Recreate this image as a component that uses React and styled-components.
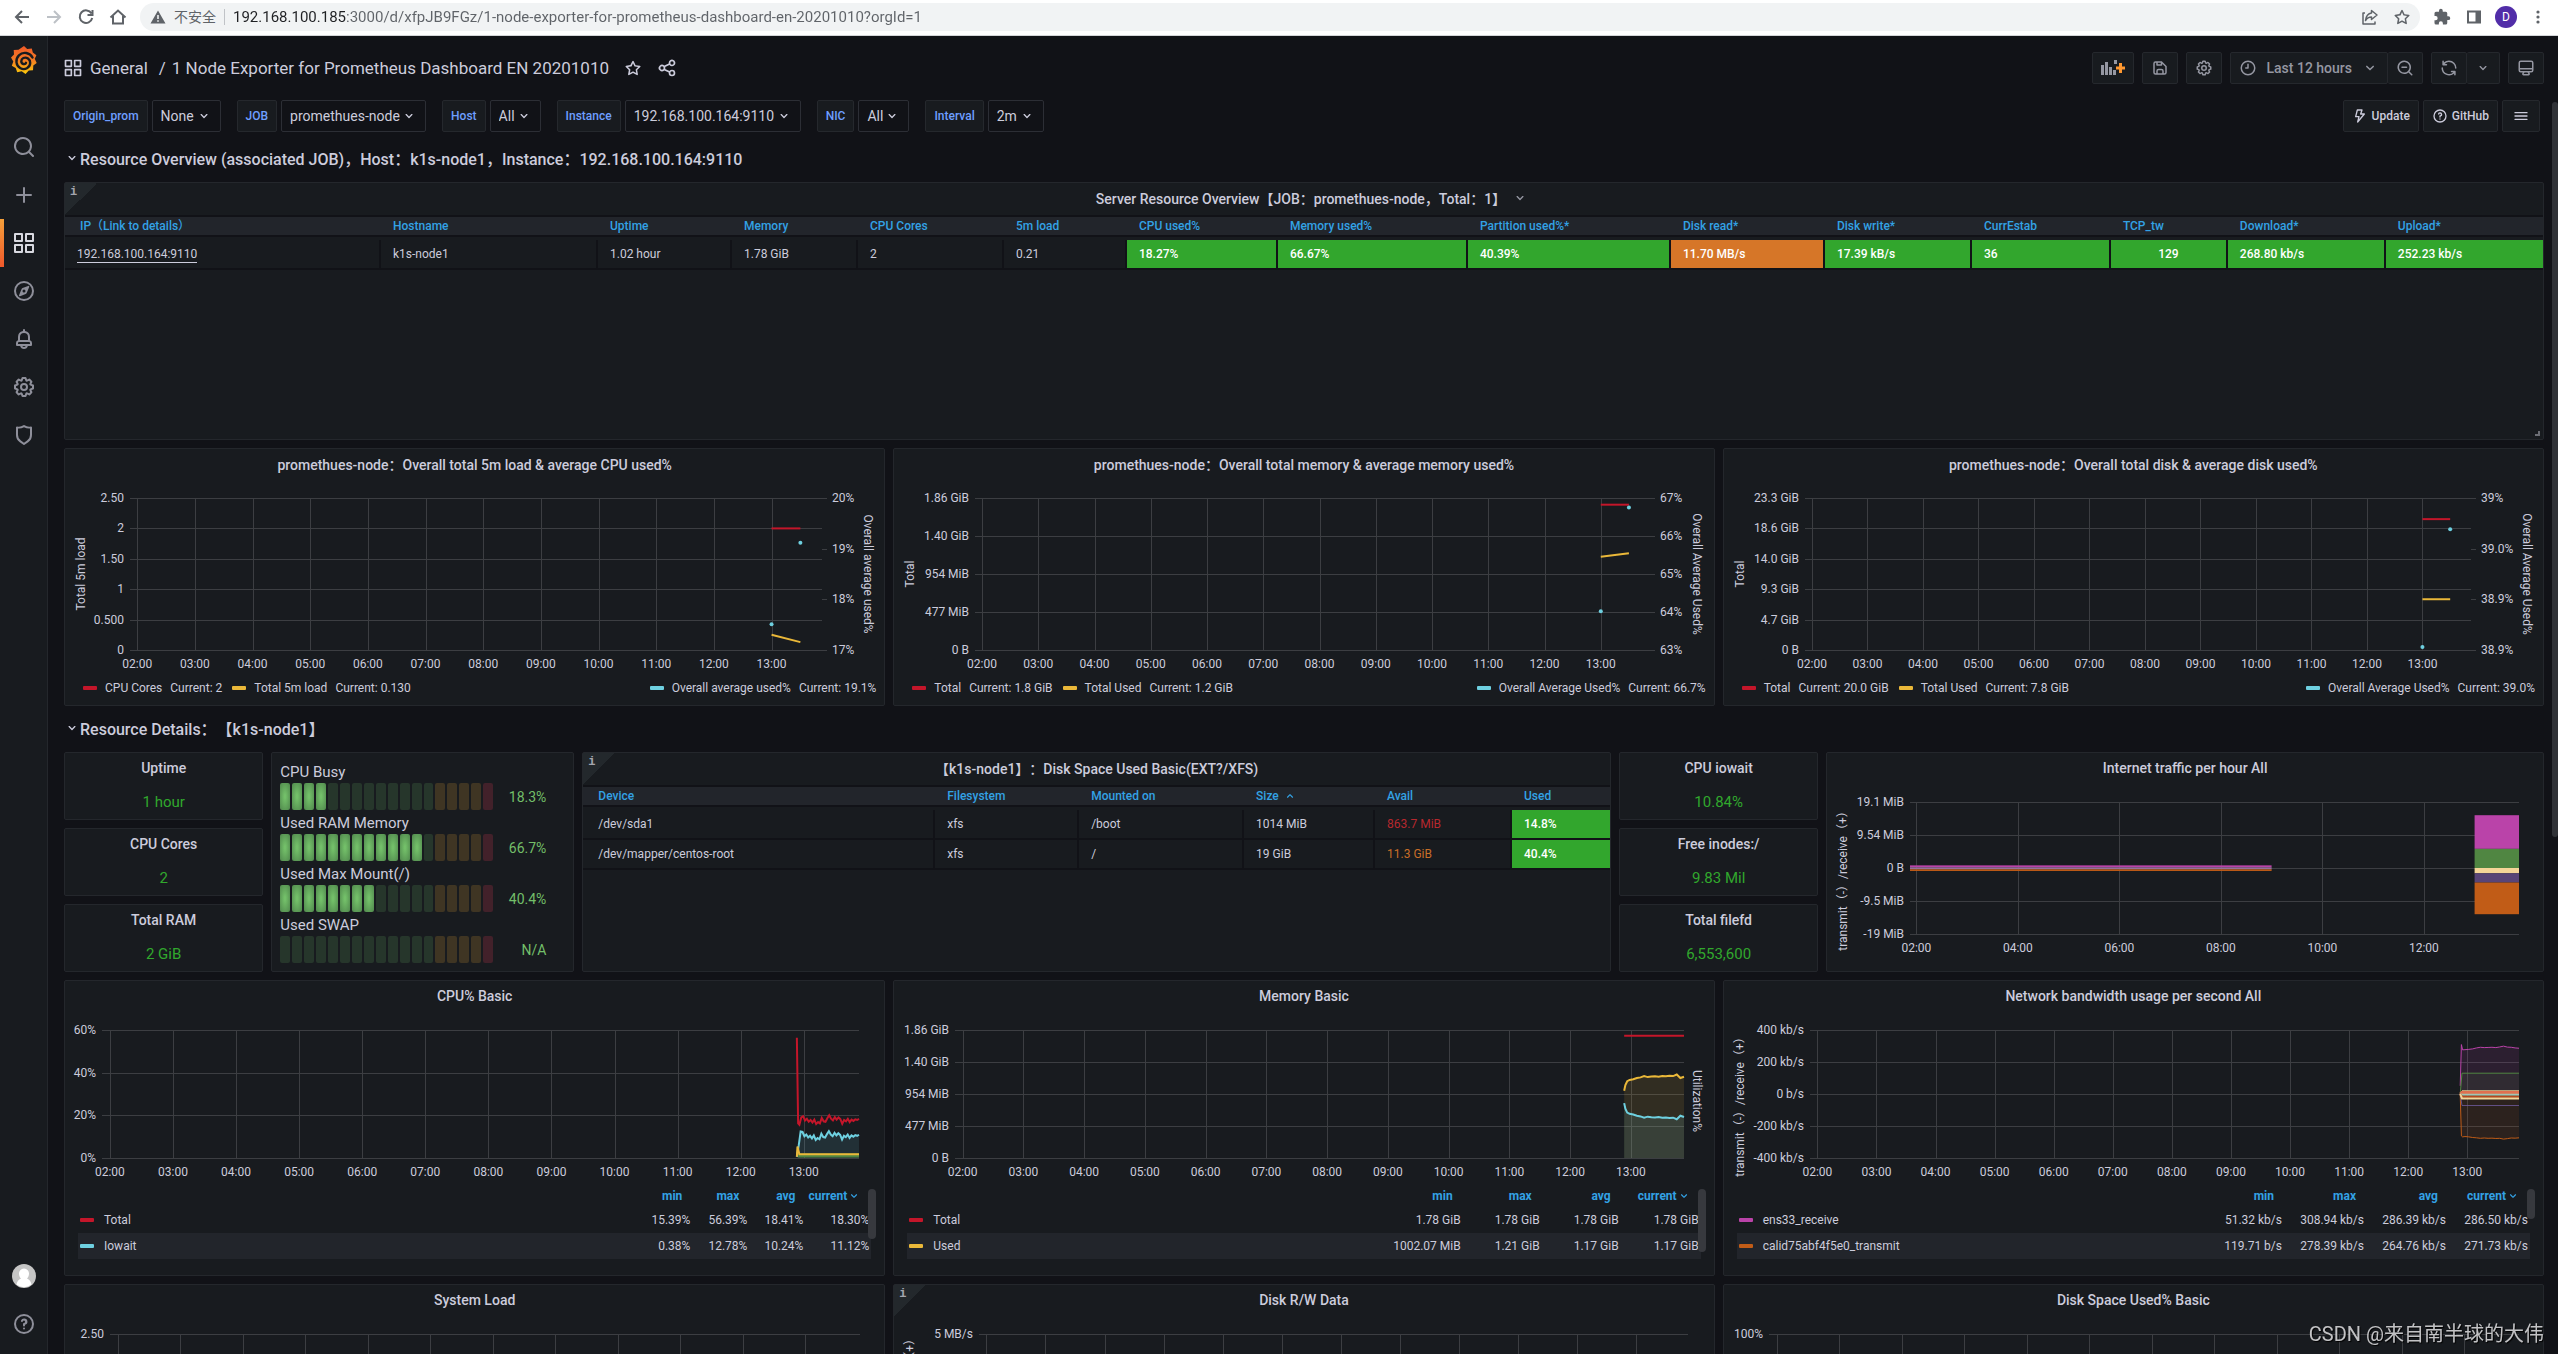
import React, { useLayoutEffect, useRef, useState } from 'react';
import styled, { createGlobalStyle } from 'styled-components';

const GlobalStyle = createGlobalStyle`
  * {
    box-sizing: border-box;
  }
  body {
    margin: 0;
    background: #111217;
    color: #ccccdc;
    font-family: Roboto, 'Noto Sans CJK SC', sans-serif;
    font-size: 14px;
    text-spacing-trim: space-all;
  }
  button, input, select {
    font-family: inherit;
  }
  a {
    color: inherit;
    text-decoration: none;
  }
`;

const colors = {
  red: '#c4162a',
  yellow: '#eab839',
  cyan: '#6ed0e0',
  magenta: '#ba43a9',
  green: '#508642',
  orange: '#c15c17',
  cream: '#f4d598',
  purple: '#584477',
  ok: '#32a62d',
  warn: '#d67628',
};

/* ---------- icons ---------- */

const icons = {
  apps: 'M10,13H3a1,1,0,0,0-1,1v7a1,1,0,0,0,1,1h7a1,1,0,0,0,1-1V14A1,1,0,0,0,10,13ZM9,20H4V15H9ZM21,2H14a1,1,0,0,0-1,1v7a1,1,0,0,0,1,1h7a1,1,0,0,0,1-1V3A1,1,0,0,0,21,2ZM20,9H15V4h5Zm1,4H14a1,1,0,0,0-1,1v7a1,1,0,0,0,1,1h7a1,1,0,0,0,1-1V14A1,1,0,0,0,21,13Zm-1,7H15V15h5ZM10,2H3A1,1,0,0,0,2,3v7a1,1,0,0,0,1,1h7a1,1,0,0,0,1-1V3A1,1,0,0,0,10,2ZM9,9H4V4H9Z',
  search: 'M21.71,20.29,18,16.61A9,9,0,1,0,16.61,18l3.68,3.68a1,1,0,0,0,1.42,0A1,1,0,0,0,21.71,20.29ZM11,18a7,7,0,1,1,7-7A7,7,0,0,1,11,18Z',
  zoomOut: 'M21.71,20.29,18,16.61A9,9,0,1,0,16.61,18l3.68,3.68a1,1,0,0,0,1.42,0A1,1,0,0,0,21.71,20.29ZM11,18a7,7,0,1,1,7-7A7,7,0,0,1,11,18ZM14,10H8a1,1,0,0,0,0,2h6a1,1,0,0,0,0-2Z',
  plus: 'M19,11H13V5a1,1,0,0,0-2,0v6H5a1,1,0,0,0,0,2h6v6a1,1,0,0,0,2,0V13h6a1,1,0,0,0,0-2Z',
  compass: 'M12,2A10,10,0,1,0,22,12,10,10,0,0,0,12,2Zm0,18a8,8,0,1,1,8-8A8,8,0,0,1,12,20ZM16.2,6.9l-5.6,2.2a2,2,0,0,0-1.1,1.1L7,16.2a.8.8,0,0,0,1,1l5.700-2.300a2,2,0,0,0,1.100-1.100L17.200,7.900A.8.8,0,0,0,16.200,6.900ZM12,13.500A1.500,1.500,0,1,1,13.500,12,1.500,1.500,0,0,1,12,13.500Z',
  bell: 'M18,13.18V10a6,6,0,0,0-5-5.91V3a1,1,0,0,0-2,0V4.09A6,6,0,0,0,6,10v3.18A3,3,0,0,0,4,16v2a1,1,0,0,0,1,1H8.14a4,4,0,0,0,7.72,0H19a1,1,0,0,0,1-1V16A3,3,0,0,0,18,13.18ZM8,10a4,4,0,0,1,8,0v3H8Zm4,10a2,2,0,0,1-1.720-1h3.440A2,2,0,0,1,12,20Zm6-3H6V16a1,1,0,0,1,1-1H17a1,1,0,0,1,1,1Z',
  cog: 'M21.32,9.55l-1.89-.63.89-1.78A1,1,0,0,0,20.13,6L18,3.87a1,1,0,0,0-1.15-.19l-1.78.89-.63-1.89A1,1,0,0,0,13.5,2h-3a1,1,0,0,0-.95.68L8.92,4.57,7.14,3.68A1,1,0,0,0,6,3.87L3.87,6a1,1,0,0,0-.19,1.15l.89,1.78-1.89.63A1,1,0,0,0,2,10.5v3a1,1,0,0,0,.68.95l1.89.63-.89,1.78A1,1,0,0,0,3.87,18L6,20.13a1,1,0,0,0,1.15.19l1.78-.89.63,1.89a1,1,0,0,0,.95.68h3a1,1,0,0,0,.95-.68l.63-1.89,1.78.89A1,1,0,0,0,18,20.13L20.13,18a1,1,0,0,0,.19-1.15l-.89-1.78,1.89-.63A1,1,0,0,0,22,13.5v-3A1,1,0,0,0,21.32,9.55ZM20,12.78l-1.2.4A2,2,0,0,0,17.64,16l.57,1.14-1.1,1.1L16,17.64a2,2,0,0,0-2.79,1.16l-.4,1.2H11.22l-.4-1.2A2,2,0,0,0,8,17.64l-1.14.57-1.1-1.1L6.36,16A2,2,0,0,0,5.2,13.18L4,12.78V11.22l1.2-.4A2,2,0,0,0,6.36,8L5.79,6.89l1.1-1.1L8,6.36A2,2,0,0,0,10.82,5.2l.4-1.2h1.56l.4,1.2A2,2,0,0,0,16,6.36l1.14-.57,1.1,1.1L17.64,8a2,2,0,0,0,1.16,2.79l1.2.4ZM12,8a4,4,0,1,0,4,4A4,4,0,0,0,12,8Zm0,6a2,2,0,1,1,2-2A2,2,0,0,1,12,14Z',
  shield: 'M19.63,3.65a1,1,0,0,0-.84-.2,8,8,0,0,1-6.22-1.27,1,1,0,0,0-1.14,0A8,8,0,0,1,5.21,3.45a1,1,0,0,0-.84.2A1,1,0,0,0,4,4.43v7.45a9,9,0,0,0,3.77,7.33l3.65,2.6a1,1,0,0,0,1.16,0l3.65-2.6A9,9,0,0,0,20,11.88V4.43A1,1,0,0,0,19.63,3.65ZM18,11.88a7,7,0,0,1-2.93,5.7L12,19.77,8.93,17.58A7,7,0,0,1,6,11.88V5.58a10,10,0,0,0,6-1.39,10,10,0,0,0,6,1.39Z',
  question: 'M12,2A10,10,0,1,0,22,12,10,10,0,0,0,12,2Zm0,18a8,8,0,1,1,8-8A8,8,0,0,1,12,20ZM12,6.500a3.200,3.200,0,0,0-3,2.100,1,1,0,1,0,1.900.6A1.200,1.200,0,1,1,12,11a1,1,0,0,0-1,1v1.500a1,1,0,0,0,2,0v-.7A3.200,3.200,0,0,0,12,6.500ZM12,15.500a1,1,0,1,0,1,1A1,1,0,0,0,12,15.500Z',
  down: 'M17,9.17a1,1,0,0,0-1.41,0L12,12.71,8.46,9.17a1,1,0,0,0-1.41,0,1,1,0,0,0,0,1.42l4.24,4.24a1,1,0,0,0,1.42,0L17,10.59A1,1,0,0,0,17,9.17Z',
  up: 'M17,14.83a1,1,0,0,1-1.41,0L12,11.29,8.46,14.83a1,1,0,0,1-1.41,0,1,1,0,0,1,0-1.42l4.24-4.24a1,1,0,0,1,1.42,0L17,13.41A1,1,0,0,1,17,14.83Z',
  star: 'M22,9.67A1,1,0,0,0,21.14,9l-5.69-.83L12.9,3a1,1,0,0,0-1.8,0L8.55,8.16,2.86,9a1,1,0,0,0-.81.68,1,1,0,0,0,.25,1l4.13,4-1,5.68A1,1,0,0,0,6.9,21.44L12,18.77l5.1,2.67a.93.93,0,0,0,.46.12,1,1,0,0,0,.59-.19,1,1,0,0,0,.4-1l-1-5.68,4.13-4A1,1,0,0,0,22,9.67Zm-6.15,4a1,1,0,0,0-.29.88l.72,4.2-3.76-2a1.06,1.06,0,0,0-.94,0l-3.76,2,.72-4.2a1,1,0,0,0-.29-.88l-3-3,4.21-.61a1,1,0,0,0,.76-.55L12,5.7l1.88,3.82a1,1,0,0,0,.76.55l4.21.61Z',
  share: 'M18,14a4,4,0,0,0-3.08,1.48l-5.1-2.35a3.64,3.64,0,0,0,0-2.26l5.1-2.35A4,4,0,1,0,14,6a4.17,4.17,0,0,0,.07.71L8.79,9.14a4,4,0,1,0,0,5.72l5.28,2.43A4.17,4.17,0,0,0,14,18a4,4,0,1,0,4-4ZM18,4a2,2,0,1,1-2,2A2,2,0,0,1,18,4ZM6,14a2,2,0,1,1,2-2A2,2,0,0,1,6,14Zm12,6a2,2,0,1,1,2-2A2,2,0,0,1,18,20Z',
  save: 'M20.71,9.29l-6-6a1,1,0,0,0-.32-.21A1.09,1.09,0,0,0,14,3H6A3,3,0,0,0,3,6V18a3,3,0,0,0,3,3H18a3,3,0,0,0,3-3V10A1,1,0,0,0,20.71,9.29ZM9,5h4V7H9Zm6,14H9V16a1,1,0,0,1,1-1h4a1,1,0,0,1,1,1Zm4-1a1,1,0,0,1-1,1H17V16a3,3,0,0,0-3-3H10a3,3,0,0,0-3,3v3H6a1,1,0,0,1-1-1V6A1,1,0,0,1,6,5H7V8A1,1,0,0,0,8,9h6a1,1,0,0,0,1-1V6.41l4,4Z',
  clock: 'M12,2A10,10,0,1,0,22,12,10,10,0,0,0,12,2Zm0,18a8,8,0,1,1,8-8A8,8,0,0,1,12,20ZM12,6a1,1,0,0,0-1,1v4H9a1,1,0,0,0,0,2h3a1,1,0,0,0,1-1V7A1,1,0,0,0,12,6Z',
  sync: 'M19.91,15.51H15.38a1,1,0,0,0,0,2h2.4A8,8,0,0,1,4,12a1,1,0,0,0-2,0,10,10,0,0,0,16.88,7.23V21a1,1,0,0,0,2,0V16.5A1,1,0,0,0,19.91,15.51ZM12,2A10,10,0,0,0,5.12,4.77V3a1,1,0,0,0-2,0V7.5a1,1,0,0,0,1,1h4.5a1,1,0,0,0,0-2H6.22A8,8,0,0,1,20,12a1,1,0,0,0,2,0A10,10,0,0,0,12,2Z',
  monitor: 'M19,2H5A3,3,0,0,0,2,5V15a3,3,0,0,0,3,3H7.64l-.58,1a2,2,0,0,0,0,2,2,2,0,0,0,1.75,1h6.46A2,2,0,0,0,17,21a2,2,0,0,0,0-2l-.59-1H19a3,3,0,0,0,3-3V5A3,3,0,0,0,19,2ZM8.77,20,10,18H14l1.2,2ZM20,15a1,1,0,0,1-1,1H5a1,1,0,0,1-1-1V14H20Zm0-3H4V5A1,1,0,0,1,5,4H19a1,1,0,0,1,1,1Z',
  bars: 'M3,8H21a1,1,0,0,0,0-2H3A1,1,0,0,0,3,8Zm18,8H3a1,1,0,0,0,0,2H21a1,1,0,0,0,0-2Zm0-5H3a1,1,0,0,0,0,2H21a1,1,0,0,0,0-2Z',
};

const Glyph = styled.svg`
  display: block;
  flex: none;
  fill: currentColor;
`;

const Icon = ({ name, size = 18 }) => (
  <Glyph width={size} height={size} viewBox="0 0 24 24" fillRule="evenodd" aria-hidden="true">
    <path fillRule="evenodd" d={icons[name]} />
  </Glyph>
);

const LineGlyph = styled.svg`
  display: block;
  flex: none;
  fill: none;
  stroke: currentColor;
  stroke-width: 2;
`;

const GrafanaLogo = () => (
  <svg width="26" height="28" viewBox="0 0 26 28" aria-hidden="true">
    <defs>
      <linearGradient id="logo" x1="0" y1="0" x2="0" y2="1">
        <stop offset="0" stopColor="#f05a28" />
        <stop offset="0.5" stopColor="#f37b24" />
        <stop offset="1" stopColor="#fbca0a" />
      </linearGradient>
    </defs>
    <path
      fill="url(#logo)"
      d="M13 0l3.200 3 4.600-.6 1 4.200 3.600 2.600-1.700 3.600 2 4.200-3.400 2.600-.3 4.600-4.200.2L14.500 28l-3.800-2.800-4.500 1-1.500-4.200L.8 19.800 2.300 15.500 0 11.600l3-3L2.700 4l4.800-.2z"
    />
    <path
      fill="none"
      stroke="#181b1f"
      strokeWidth="2.400"
      strokeLinecap="round"
      d="M21.500 11.500C19 6.500 12 5.200 7.900 9.300c-4 4.100-3 10.600 1.600 13 4.400 2.200 9.500-.6 9.700-5.300.1-4-3.700-6.300-6.800-5-2.800 1.300-2.800 5.300 0 6 1.200.3 2.300-.3 2.600-1.200"
    />
  </svg>
);

/* ---------- browser bar ---------- */

const BrowserBar = styled.div`
  display: flex;
  flex: none;
  align-items: center;
  height: 36px;
  padding: 0 4px 2px 12px;
  background: #fff;
  border-bottom: 1px solid #d4d6d9;
  color: #5f6368;
`;

const BarButton = styled.button`
  display: flex;
  align-items: center;
  justify-content: center;
  width: 32px;
  height: 28px;
  padding: 0;
  border: 0;
  background: none;
  color: ${(p) => (p.$dim ? '#bdc1c6' : '#5f6368')};
`;

const NavButtons = styled.div`
  display: flex;
  margin-left: -6px;
  margin-right: 6px;
`;

const Address = styled.div`
  display: flex;
  flex: 1;
  align-items: center;
  height: 28px;
  margin-right: 6px;
  padding: 0 2px 0 10px;
  border-radius: 14px;
  background: #f1f3f4;
`;

const Unsafe = styled.span`
  margin: 0 8px 0 8px;
  padding-right: 8px;
  border-right: 1px solid #c0c3c7;
  font-size: 14px;
  line-height: 16px;
`;

/* host part is darker than the path */
const UrlInput = styled.input`
  flex: 1;
  min-width: 0;
  padding: 0;
  border: 0;
  outline: 0;
  background: linear-gradient(90deg, #202124 113px, #5f6368 113px);
  background-clip: text;
  -webkit-text-fill-color: transparent;
  font-size: 15px;
`;

const Profile = styled.span`
  display: flex;
  align-items: center;
  justify-content: center;
  width: 22px;
  height: 22px;
  border-radius: 50%;
  background: #512da8;
  color: #fff;
  font-size: 12px;
`;

function Browser() {
  return (
    <BrowserBar>
      <NavButtons>
        <BarButton aria-label="Back">
          <LineGlyph width="18" height="18" viewBox="0 0 18 18"><path d="M16 9H3M9 3L3 9l6 6" /></LineGlyph>
        </BarButton>
        <BarButton aria-label="Forward" $dim>
          <LineGlyph width="18" height="18" viewBox="0 0 18 18"><path d="M2 9h13M9 3l6 6-6 6" /></LineGlyph>
        </BarButton>
        <BarButton aria-label="Reload">
          <LineGlyph width="18" height="18" viewBox="0 0 18 18"><path d="M14.500 5.500A6.300 6.300 0 1 0 15.200 10M15.500 2v5h-5" /></LineGlyph>
        </BarButton>
        <BarButton aria-label="Home">
          <LineGlyph width="18" height="18" viewBox="0 0 18 18"><path d="M1.500 9.500L9 2.500l7.500 7M4 8v7.500h10V8" /></LineGlyph>
        </BarButton>
      </NavButtons>
      <Address>
        <Glyph width="16" height="16" viewBox="0 0 16 16" fillRule="evenodd">
          <path d="M8 1.500L15.500 14.500H.5zM7.200 6v4h1.600V6zm0 5.200v1.600h1.600v-1.600z" />
        </Glyph>
        <Unsafe>不安全</Unsafe>
        <UrlInput
          aria-label="Address"
          defaultValue="192.168.100.185:3000/d/xfpJB9FGz/1-node-exporter-for-prometheus-dashboard-en-20201010?orgId=1"
        />
        <BarButton aria-label="Share this page">
          <LineGlyph width="18" height="18" viewBox="0 0 18 18" strokeLinejoin="round">
            <path d="M4 5H2v11h12v-2.500M10.500 2.500l5.500 4.500-5.500 4.500V9C8 9 6 10 4.500 12.500 5 8.500 7 5.500 10.500 5z" strokeWidth="1.500" />
          </LineGlyph>
        </BarButton>
        <BarButton aria-label="Bookmark"><Icon name="star" size={18} /></BarButton>
      </Address>
      <BarButton aria-label="Extensions">
        <Glyph width="18" height="18" viewBox="0 0 24 24">
          <path d="M20.500 11H19V7a2 2 0 0 0-2-2h-4V3.500a2.500 2.500 0 0 0-5 0V5H4a2 2 0 0 0-2 2v3.800h1.500a2.700 2.700 0 0 1 0 5.400H2V20a2 2 0 0 0 2 2h3.800v-1.500a2.700 2.700 0 0 1 5.400 0V22H17a2 2 0 0 0 2-2v-4h1.500a2.500 2.500 0 0 0 0-5z" />
        </Glyph>
      </BarButton>
      <BarButton aria-label="Side panel">
        <Glyph width="16" height="16" viewBox="0 0 16 16" fillRule="evenodd">
          <path d="M1 1.500h14v13H1zM3 3.500v9h6.500v-9z" />
        </Glyph>
      </BarButton>
      <BarButton aria-label="Profile"><Profile>D</Profile></BarButton>
      <BarButton aria-label="More">
        <Glyph width="16" height="16" viewBox="0 0 16 16">
          <circle cx="8" cy="3" r="1.600" /><circle cx="8" cy="8" r="1.600" /><circle cx="8" cy="13" r="1.600" />
        </Glyph>
      </BarButton>
    </BrowserBar>
  );
}

/* ---------- page shell ---------- */

const Screen = styled.div`
  display: flex;
  flex-direction: column;
  height: 100vh;
`;

const Shell = styled.div`
  position: relative;
  display: flex;
  flex: 1;
  min-height: 0;
`;

const Sidebar = styled.nav`
  display: flex;
  flex: none;
  flex-direction: column;
  width: 48px;
  padding-bottom: 6px;
  background: #181b1f;
  border-right: 1px solid #24272c;
`;

const SideItem = styled.a`
  display: flex;
  align-items: center;
  justify-content: center;
  height: 48px;
  color: ${(p) => (p.$active ? '#d8d9e0' : '#8e8f9a')};
  background: ${(p) =>
    p.$active ? 'linear-gradient(#f5a03a, #f0592b) left / 4px 100% no-repeat' : 'none'};
`;

const SideGroup = styled.div`
  margin-top: 39px;
  margin-bottom: auto;
`;

const Main = styled.main`
  flex: 1;
  min-width: 0;
  overflow-y: auto;
  scrollbar-width: none;
`;

const PageThumb = styled.div`
  position: absolute;
  top: 66px;
  right: 0;
  width: 6px;
  height: 735px;
  border-radius: 3px;
  background: #303237;
`;

const NavBar = styled.header`
  display: flex;
  align-items: center;
  height: 64px;
  padding: 0 14px 0 15px;
`;

const Crumbs = styled.h1`
  display: flex;
  flex: 1;
  align-items: center;
  margin: 0 0 0 7px;
  font-size: 17px;
  font-weight: 400;
`;

const Slash = styled.span`
  margin: 0 6px 0 11px;
`;

const PlainButton = styled.button`
  display: flex;
  padding: 0;
  margin-left: 15px;
  border: 0;
  background: none;
  color: #ccccdc;
`;

const Tools = styled.div`
  display: flex;
  gap: 8px;
`;

const Joined = styled.div`
  display: flex;
  & > button + button {
    border-left: 0;
  }
`;

const ToolButton = styled.button`
  display: flex;
  align-items: center;
  gap: 9px;
  height: 32px;
  padding: 0 8px;
  border: 1px solid #25282d;
  border-radius: 2px;
  background: #181b1f;
  color: #9597a2;
  font-size: 14px;
  font-weight: 500;
`;

const SubMenu = styled.div`
  display: flex;
  justify-content: space-between;
  padding: 0 18px 0 16px;
`;

const Variables = styled.div`
  display: flex;
  gap: 16px;
`;

const Variable = styled.div`
  display: flex;
  gap: 4px;
`;

const VarLabel = styled.label`
  display: flex;
  align-items: center;
  height: 32px;
  padding: 0 8px;
  border: 1px solid #25282d;
  border-radius: 2px;
  background: #181b1f;
  color: #6e9fff;
  font-size: 12px;
  font-weight: 500;
`;

const VarValue = styled.div`
  display: flex;
  align-items: center;
  gap: 1px;
  height: 32px;
  padding: 0 8px;
  border: 1px solid #2c2e35;
  border-radius: 2px;
  background: #111217;
`;

const VarSelect = styled.select`
  padding: 0;
  border: 0;
  appearance: none;
  background: transparent;
  color: #ccccdc;
  font-size: 14px;
`;

const Links = styled.div`
  display: flex;
  gap: 4px;
`;

const LinkButton = styled.a`
  display: flex;
  align-items: center;
  gap: 4px;
  height: 32px;
  padding: 0 ${(p) => (p.$wide ? 10 : 8)}px;
  border: 1px solid #25282d;
  border-radius: 2px;
  background: #181b1f;
  font-size: 12px;
  font-weight: 500;
`;

const variables = [
  ['Origin_prom', 'None'],
  ['JOB', 'promethues-node'],
  ['Host', 'All'],
  ['Instance', '192.168.100.164:9110'],
  ['NIC', 'All'],
  ['Interval', '2m'],
];

function Header() {
  return (
    <>
      <NavBar>
        <Icon name="apps" size={20} />
        <Crumbs>
          <a href="#general">General</a>
          <Slash>/</Slash>
          <a href="#dashboard">1 Node Exporter for Prometheus Dashboard EN 20201010</a>
          <PlainButton aria-label="Mark as favorite"><Icon name="star" size={18} /></PlainButton>
          <PlainButton aria-label="Share dashboard"><Icon name="share" size={20} /></PlainButton>
        </Crumbs>
        <Tools>
          <ToolButton aria-label="Add panel">
            <svg width="24" height="18" viewBox="0 0 24 18" aria-hidden="true">
              <path fill="#9597a2" d="M0 6h3v10H0zM4 3h3v13H4zM8 8h3v8H8zM12 11h3v5h-3zM13 1h3v4h-3z" />
              <path fill="#ff9830" d="M18 4h3v3.500h3v3h-3V14h-3v-3.500h-3v-3h3z" />
            </svg>
          </ToolButton>
          <ToolButton aria-label="Save dashboard"><Icon name="save" /></ToolButton>
          <ToolButton aria-label="Dashboard settings"><Icon name="cog" /></ToolButton>
          <Joined>
            <ToolButton><Icon name="clock" />Last 12 hours<Icon name="down" /></ToolButton>
            <ToolButton aria-label="Zoom out"><Icon name="zoomOut" /></ToolButton>
          </Joined>
          <Joined>
            <ToolButton aria-label="Refresh"><Icon name="sync" /></ToolButton>
            <ToolButton aria-label="Refresh interval"><Icon name="down" size={16} /></ToolButton>
          </Joined>
          <ToolButton aria-label="Cycle view mode"><Icon name="monitor" /></ToolButton>
        </Tools>
      </NavBar>
      <SubMenu>
        <Variables>
          {variables.map(([name, value]) => (
            <Variable key={name}>
              <VarLabel htmlFor={`var-${name}`}>{name}</VarLabel>
              <VarValue>
                <VarSelect id={`var-${name}`}><option>{value}</option></VarSelect>
                <Icon name="down" size={16} />
              </VarValue>
            </Variable>
          ))}
        </Variables>
        <Links>
          <LinkButton href="#update">
            <LineGlyph width="16" height="16" viewBox="0 0 24 24" strokeLinejoin="round">
              <path d="M8 3h7l-2 6h5.500L8.500 21l2-8H5.500z" />
            </LineGlyph>
            Update
          </LinkButton>
          <LinkButton href="#github"><Icon name="question" size={16} />GitHub</LinkButton>
          <LinkButton href="#links" $wide aria-label="Dashboards"><Icon name="bars" size={16} /></LinkButton>
        </Links>
      </SubMenu>
    </>
  );
}

/* ---------- grid and panels ---------- */

const Grid = styled.div`
  display: grid;
  grid-template-columns: repeat(24, minmax(0, 1fr));
  grid-auto-rows: 30px;
  gap: 8px;
  padding: 12px 14px 0 16px;
`;

const RowTitle = styled.h2`
  display: flex;
  grid-column: span 24;
  align-items: center;
  margin: 0;
  padding-bottom: 2px;
  font-size: 16px;
  font-weight: 500;
`;

const Panel = styled.section`
  position: relative;
  display: flex;
  flex-direction: column;
  grid-column: span ${(p) => p.$w};
  grid-row: span ${(p) => p.$h};
  min-width: 0;
  border: 1px solid #24272c;
  border-radius: 2px;
  background: #181b1f;
`;

const PanelTitle = styled.h3`
  display: flex;
  flex: none;
  align-items: center;
  justify-content: center;
  height: 32px;
  margin: 0;
  padding-bottom: 3px;
  font-size: 14px;
  font-weight: 500;
`;

const TitleArrow = styled.span`
  width: 0;
  padding-left: 6px;
  color: #9597a2;
`;

const Corner = styled.div`
  position: absolute;
  top: 0;
  left: 0;
  width: 32px;
  height: 32px;
  padding: 3px 0 0 5px;
  background: linear-gradient(135deg, #23282c 50%, transparent 50%);
  color: #a3a5ae;
  font: 700 12px/12px 'Liberation Mono', monospace;
`;

const ResizeHandle = styled.div`
  position: absolute;
  right: 3px;
  bottom: 3px;
  width: 5px;
  height: 5px;
  border-right: 2px solid #6b6d74;
  border-bottom: 2px solid #6b6d74;
`;

const StatStack = styled.div`
  display: grid;
  grid-column: span 2;
  grid-row: span 6;
  grid-auto-rows: 1fr;
  gap: 8px;
`;

const StatValue = styled.div`
  display: flex;
  flex: 1;
  align-items: center;
  justify-content: center;
  color: #31a82d;
  font-size: 15px;
`;

const StatPanel = ({ title, children }) => (
  <Panel $w={1} $h={1}>
    <PanelTitle>{title}</PanelTitle>
    <StatValue>{children}</StatValue>
  </Panel>
);

/* ---------- tables ---------- */

const DataTable = styled.table`
  width: 100%;
  table-layout: fixed;
  border-collapse: separate;
  border-spacing: 0;
  font-size: 12px;
  line-height: 14px;
  thead th {
    height: 22px;
    padding: 0 12px;
    border-top: 2px solid #111217;
    border-bottom: 2px solid #111217;
    background: #22252b;
    color: #33a2e5;
    font-weight: 500;
    text-align: left;
    white-space: nowrap;
  }
  th:first-child, td:first-child {
    padding-left: 15px;
  }
  thead::after {
    content: '';
    display: block;
    height: 3px;
  }
`;

const Cell = styled.td`
  height: 30px;
  padding: 0 12px;
  border-bottom: 2px solid #111217;
  border-right: 2px solid #111217;
  background: ${(p) => p.$bg || 'transparent'};
  color: ${(p) => (p.$bg ? '#fff' : p.$fg || '#ccccdc')};
  font-weight: ${(p) => (p.$bg ? 500 : 400)};
  text-align: ${(p) => (p.$center ? 'center' : 'left')};
  white-space: nowrap;
  &:last-child {
    border-right: 0;
  }
`;

const CellLink = styled.a`
  margin-left: -3px;
  padding-bottom: 1px;
  border-bottom: 1px solid #ccccdc;
`;

const SortHead = styled.span`
  display: flex;
  align-items: center;
  gap: 4px;
`;

const overview = [
  { head: 'IP（Link to details）', w: 316, text: '192.168.100.164:9110', link: true },
  { head: 'Hostname', w: 217, text: 'k1s-node1' },
  { head: 'Uptime', w: 134, text: '1.02 hour' },
  { head: 'Memory', w: 126, text: '1.78 GiB' },
  { head: 'CPU Cores', w: 146, text: '2' },
  { head: '5m load', w: 123, text: '0.21' },
  { head: 'CPU used%', w: 151, text: '18.27%', bg: colors.ok },
  { head: 'Memory used%', w: 190, text: '66.67%', bg: colors.ok },
  { head: 'Partition used%*', w: 203, text: '40.39%', bg: colors.ok },
  { head: 'Disk read*', w: 154, text: '11.70 MB/s', bg: colors.warn },
  { head: 'Disk write*', w: 147, text: '17.39 kB/s', bg: colors.ok },
  { head: 'CurrEstab', w: 139, text: '36', bg: colors.ok },
  { head: 'TCP_tw', w: 117, text: '129', bg: colors.ok, center: true },
  { head: 'Download*', w: 158, text: '268.80 kb/s', bg: colors.ok },
  { head: 'Upload*', w: 157, text: '252.23 kb/s', bg: colors.ok },
];

const disks = [
  ['/dev/sda1', 'xfs', '/boot', '1014 MiB', '863.7 MiB', '14.8%'],
  ['/dev/mapper/centos-root', 'xfs', '/', '19 GiB', '11.3 GiB', '40.4%'],
];
const diskCols = [352, 144, 165, 131, 137, 98];
const availColors = ['#b7282e', '#c86e28'];

const Cols = ({ widths }) => {
  const total = widths.reduce((a, b) => a + b, 0);
  return (
    <colgroup>
      {widths.map((w, i) => <col key={i} style={{ width: `${(w / total) * 100}%` }} />)}
    </colgroup>
  );
};

function OverviewTable() {
  return (
    <DataTable>
      <Cols widths={overview.map((c) => c.w)} />
      <thead>
        <tr>{overview.map((c) => <th key={c.head}>{c.head}</th>)}</tr>
      </thead>
      <tbody>
        <tr>
          {overview.map((c) => (
            <Cell key={c.head} $bg={c.bg} $center={c.center}>
              {c.link ? <CellLink href="#details">{c.text}</CellLink> : c.text}
            </Cell>
          ))}
        </tr>
      </tbody>
    </DataTable>
  );
}

function DiskTable() {
  return (
    <DataTable>
      <Cols widths={diskCols} />
      <thead>
        <tr>
          <th>Device</th>
          <th>Filesystem</th>
          <th>Mounted on</th>
          <th><SortHead>Size <Icon name="up" size={14} /></SortHead></th>
          <th>Avail</th>
          <th>Used</th>
        </tr>
      </thead>
      <tbody>
        {disks.map((row, r) => (
          <tr key={row[0]}>
            {row.map((text, i) => (
              <Cell key={i} $fg={i === 4 ? availColors[r] : undefined} $bg={i === 5 ? colors.ok : undefined}>
                {text}
              </Cell>
            ))}
          </tr>
        ))}
      </tbody>
    </DataTable>
  );
}

/* ---------- bar gauges ---------- */

const Gauges = styled.div`
  display: flex;
  flex-direction: column;
  padding: 10px 27px 0 8px;
`;

const GaugeName = styled.div`
  height: 20px;
  font-size: 15px;
  line-height: 18px;
`;

const GaugeRow = styled.div`
  display: flex;
  align-items: center;
  justify-content: space-between;
  height: 27px;
  margin-bottom: 4px;
  color: #73bf69;
  font-size: 14px;
`;

const Segments = styled.div`
  display: grid;
  grid-template-columns: repeat(18, 1fr);
  gap: 2px;
  width: 80%;
  max-width: 214px;
  height: 27px;
`;

const segmentTone = { green: '#26362b', orange: '#3f3523', red: '#42212a' };

const Segment = styled.span`
  border-radius: 2px;
  background: ${(p) =>
    p.$lit ? 'radial-gradient(#73bf69 10%, #4f874c)' : segmentTone[p.$tone]};
`;

const gauges = [
  ['CPU Busy', 4, '18.3%'],
  ['Used RAM Memory', 12, '66.7%'],
  ['Used Max Mount(/)', 8, '40.4%'],
  ['Used SWAP', 0, 'N/A'],
];

const BarGauges = () => (
  <Gauges>
    {gauges.map(([name, lit, value]) => (
      <React.Fragment key={name}>
        <GaugeName>{name}</GaugeName>
        <GaugeRow>
          <Segments>
            {Array.from({ length: 18 }, (_, i) => (
              <Segment key={i} $lit={i < lit} $tone={i < 13 ? 'green' : i < 17 ? 'orange' : 'red'} />
            ))}
          </Segments>
          {value}
        </GaugeRow>
      </React.Fragment>
    ))}
  </Gauges>
);

/* ---------- charts ---------- */

const ChartBox = styled.div`
  flex: 1;
  min-height: 0;
  margin-bottom: ${(p) => p.$below || 0}px;
  svg {
    display: block;
  }
  text {
    fill: #ccccdc;
    font-size: 12px;
  }
`;

const START = 1.875;
const HOURS = 12;

// series values are fractions of the plot height, times are hours of the day
function Chart({ left, right, y, y2 = [], step = 1, title, title2, titleShift = 0, series = [], dots = [], blocks = [], below }) {
  const box = useRef(null);
  const [size, setSize] = useState({ w: 0, h: 0 });

  useLayoutEffect(() => {
    const read = () => setSize({ w: box.current.clientWidth, h: box.current.clientHeight });
    read();
    const watcher = new ResizeObserver(read);
    watcher.observe(box.current);
    return () => watcher.disconnect();
  }, []);

  const top = 17;
  const bottom = size.h - 26;
  const x1 = size.w - right;
  const px = (t) => left + ((t - START) / HOURS) * (x1 - left);
  const py = (v) => bottom - v * (bottom - top);
  const snap = (n) => Math.round(n) + 0.5;
  const hours = [];
  for (let h = 2; h <= 13; h += step) hours.push(h);
  const middle = (top + bottom) / 2 + titleShift;

  return (
    <ChartBox ref={box} $below={below}>
      {size.w > 0 && (
        <svg width={size.w} height={size.h}>
          <g stroke="#3c3e42">
            {y.map((label, i) => {
              const at = snap(py(1 - i / (y.length - 1)));
              return <line key={i} x1={left} x2={x1} y1={at} y2={at} />;
            })}
            {hours.map((h) => <line key={h} x1={snap(px(h))} x2={snap(px(h))} y1={top} y2={bottom} />)}
            {y2.map((label, i) => {
              const at = snap(py(1 - i / (y2.length - 1)));
              return <line key={i} x1={x1} x2={x1 + 5} y1={at} y2={at} />;
            })}
          </g>
          {blocks.map((b, i) => (
            <rect
              key={i}
              x={px(b.from)}
              width={px(b.to) - px(b.from)}
              y={py(b.top)}
              height={py(b.bottom) - py(b.top)}
              fill={b.color}
            />
          ))}
          {series.map((s, i) => {
            const pts = s.points.map(([t, v]) => `${px(t)},${py(v)}`).join(' ');
            const first = s.points[0][0];
            const last = s.points[s.points.length - 1][0];
            const base = py(s.base || 0);
            return (
              <g key={i}>
                {s.fill && <polygon points={`${px(first)},${base} ${pts} ${px(last)},${base}`} fill={s.color} opacity={s.fill} />}
                <polyline points={pts} fill="none" stroke={s.color} strokeWidth={s.width || 2} opacity={s.opacity || 1} />
              </g>
            );
          })}
          {dots.map(([t, v], i) => <circle key={i} cx={px(t)} cy={py(v)} r="2" fill={colors.cyan} />)}
          {y.map((label, i) => (
            <text key={i} x={left - 6} y={py(1 - i / (y.length - 1)) + 4} textAnchor="end">{label}</text>
          ))}
          {y2.map((label, i) => (
            <text key={i} x={x1 + 10} y={py(1 - i / (y2.length - 1)) + 4}>{label}</text>
          ))}
          {hours.map((h) => (
            <text key={h} x={px(h)} y={bottom + 18} textAnchor="middle">{String(h).padStart(2, '0')}:00</text>
          ))}
          {title && <text transform={`translate(20 ${middle}) rotate(-90)`} textAnchor="middle">{title}</text>}
          {title2 && <text transform={`translate(${size.w - 20} ${middle}) rotate(90)`} textAnchor="middle">{title2}</text>}
        </svg>
      )}
    </ChartBox>
  );
}

const LegendLine = styled.div`
  display: flex;
  flex: none;
  align-items: center;
  gap: 10px;
  height: 24px;
  margin-bottom: 5px;
  padding: 0 8px 0 18px;
  font-size: 12px;
  white-space: nowrap;
`;

const LegendItem = styled.span`
  display: flex;
  align-items: center;
  gap: 8px;
  margin-left: ${(p) => (p.$end ? 'auto' : 0)};
`;

const Swatch = styled.i`
  display: inline-block;
  width: 14px;
  height: 4px;
  border-radius: 1px;
  background: ${(p) => p.$color};
`;

const Legend = ({ items }) => (
  <LegendLine>
    {items.map(([name, value, color], i) => (
      <LegendItem key={name} $end={i === items.length - 1}>
        <Swatch $color={color} />
        {name}
        <span>Current: {value}</span>
      </LegendItem>
    ))}
  </LegendLine>
);

const LegendArea = styled.div`
  position: relative;
  flex: none;
  height: 91px;
  padding: 0 13px;
`;

const LegendThumb = styled.div`
  position: absolute;
  top: 5px;
  right: 8px;
  width: 8px;
  height: ${(p) => p.$size}px;
  border-radius: 4px;
  background: #37393e;
`;

const LegendGrid = styled.table`
  width: 100%;
  table-layout: fixed;
  border-collapse: collapse;
  font-size: 12px;
  line-height: 14px;
  th {
    height: 23px;
    padding: 0 10px 0 0;
    color: #33a2e5;
    font-weight: 700;
    text-align: right;
  }
  th:last-child {
    padding: 0;
  }
  td {
    height: 26px;
    padding: 0 2px;
    text-align: right;
    white-space: nowrap;
  }
  td:first-child {
    text-align: left;
  }
  tbody tr:nth-child(even) {
    background: #22252b;
  }
`;

const SeriesName = styled.span`
  display: flex;
  align-items: center;
  gap: 10px;
`;

const SortedHead = styled.span`
  display: flex;
  align-items: center;
  justify-content: flex-end;
  padding-right: 10px;
`;

function LegendTable({ widths, rows, thumb }) {
  return (
    <LegendArea>
      <LegendGrid>
        <colgroup>
          <col />
          {widths.map((w, i) => <col key={i} style={{ width: w }} />)}
        </colgroup>
        <thead>
          <tr>
            <th aria-label="series" />
            <th>min</th>
            <th>max</th>
            <th>avg</th>
            <th><SortedHead>current<Icon name="down" size={14} /></SortedHead></th>
          </tr>
        </thead>
        <tbody>
          {rows.map(([name, color, ...values]) => (
            <tr key={name}>
              <td><SeriesName><Swatch $color={color} />{name}</SeriesName></td>
              {values.map((v, i) => <td key={i}>{v}</td>)}
            </tr>
          ))}
        </tbody>
      </LegendGrid>
      <LegendThumb $size={thumb} />
    </LegendArea>
  );
}

/* ---------- series data ---------- */

const END = 13.875;
const spread = (from, values) =>
  values.map((v, i) => [from + ((END - from) * i) / (values.length - 1), v]);

const busy = [19, 19.6, 17.6, 18.4, 17, 17.8, 16.6, 18, 15.9, 16.8, 16.2, 18.8, 17.2, 17, 18.6, 20, 18.4, 17.6, 19.2, 18, 19, 18.2, 16, 17.8, 17.2, 18.4, 16.8, 18, 17.4, 18.1, 17.8, 18.3];
const cpuTotal = [[12.89, 0.94], [12.91, 0.27], [12.93, 0.26], ...spread(12.96, busy.map((v) => v / 60))];
const cpuWait = [[12.89, 0.01], [12.92, 0.1], ...spread(12.95, [12.4, ...busy.slice(1).map((v) => v - 7.4)].map((v) => v / 60))];
const cpuUser = [[12.89, 0.01], [12.9, 0.09], [12.93, 0.03], [END, 0.03]];
const cpuSystem = [[12.91, 0.02], [END, 0.02]];

const memUsed = [[12.89, 0.526], [12.91, 0.57], [12.94, 0.6], ...spread(12.98, [0.61, 0.615, 0.625, 0.63, 0.64, 0.632, 0.636, 0.638, 0.635, 0.64, 0.638, 0.643, 0.64, 0.652, 0.625, 0.635])];
const memFree = memUsed.map(([t, v]) => [t, 0.955 - v]);

const kb = (v) => (v + 400) / 800;
const receive = [[12.88, kb(51)], [12.9, kb(309)], [12.92, kb(276)], ...spread(12.96, [277, 279, 282, 288, 292, 290, 291, 292, 290, 294, 299, 293, 292, 288, 286].map(kb))];
const transmit = [[12.88, kb(0)], [12.9, kb(-262)], [12.92, kb(-268)], ...spread(12.96, [-266, -268, -272, -274, -277, -275, -277, -276, -278, -277, -282, -279, -275, -276, -274].map(kb))];
const flat = (v) => [[12.88, kb(0)], [12.91, kb(v)], [END, kb(v)]];

const flow = (v) => (v + 1) / 2;

const bandwidth = [
  { color: colors.magenta, points: receive, base: 0.5, fill: 0.12, width: 1 },
  { color: colors.green, points: flat(130), base: 0.5, fill: 0.12, width: 1 },
  { color: colors.orange, points: transmit, base: 0.5, fill: 0.12, width: 1 },
  { color: '#705da0', points: flat(-72), base: 0.5, width: 1, opacity: 0.8 },
  { color: colors.cream, points: flat(20), width: 1 },
  { color: '#e0704f', points: flat(10), width: 3 },
  { color: '#9fc7b5', points: flat(-5), width: 2 },
  { color: '#b5481d', points: flat(-17), width: 2 },
  { color: colors.cream, points: flat(-28), width: 2 },
];

const traffic = [
  { from: START, to: 9, top: flow(0.04), bottom: flow(0.01), color: colors.magenta },
  { from: START, to: 9, top: flow(0.01), bottom: flow(-0.02), color: '#96709a' },
  { from: START, to: 9, top: flow(-0.02), bottom: flow(-0.045), color: colors.orange },
  { from: 13, to: END, top: flow(0.8), bottom: flow(0.29), color: colors.magenta },
  { from: 13, to: END, top: flow(0.29), bottom: flow(0), color: colors.green },
  { from: 13, to: END, top: flow(0), bottom: flow(-0.08), color: colors.cream },
  { from: 13, to: END, top: flow(-0.08), bottom: flow(-0.22), color: colors.purple },
  { from: 13, to: END, top: flow(-0.22), bottom: flow(-0.7), color: colors.orange },
];

const memoryTicks = ['1.86 GiB', '1.40 GiB', '954 MiB', '477 MiB', '0 B'];

const Watermark = styled.div`
  position: fixed;
  right: 14px;
  bottom: 6px;
  color: rgba(226, 226, 228, 0.85);
  font-size: 20px;
  line-height: 28px;
  text-shadow: 1px 1px 1px #000;
`;

export default function App() {
  return (
    <Screen>
      <GlobalStyle />
      <Browser />
      <Shell>
        <Sidebar>
          <SideItem href="#home" aria-label="Home"><GrafanaLogo /></SideItem>
          <SideGroup>
            <SideItem href="#search" aria-label="Search"><Icon name="search" size={24} /></SideItem>
            <SideItem href="#create" aria-label="Create"><Icon name="plus" size={24} /></SideItem>
            <SideItem href="#dashboards" aria-label="Dashboards" $active><Icon name="apps" size={24} /></SideItem>
            <SideItem href="#explore" aria-label="Explore"><Icon name="compass" size={24} /></SideItem>
            <SideItem href="#alerting" aria-label="Alerting"><Icon name="bell" size={24} /></SideItem>
            <SideItem href="#config" aria-label="Configuration"><Icon name="cog" size={24} /></SideItem>
            <SideItem href="#admin" aria-label="Server admin"><Icon name="shield" size={24} /></SideItem>
          </SideGroup>
          <SideItem href="#profile" aria-label="Profile">
            <svg width="24" height="24" viewBox="0 0 24 24" aria-hidden="true">
              <circle cx="12" cy="12" r="12" fill="#c5c5c5" />
              <path fill="#fff" d="M12 4.500a5 5 0 0 1 5 5.500c-.2 2-1 3.500-2 4.500 2.500 1 4 3 4.500 6a12 12 0 0 1-15 0c.5-3 2-5 4.500-6-1-1-1.800-2.500-2-4.500a5 5 0 0 1 5-5.500z" />
            </svg>
          </SideItem>
          <SideItem href="#help" aria-label="Help"><Icon name="question" size={24} /></SideItem>
        </Sidebar>

        <Main>
          <Header />
          <Grid>
            <RowTitle><Icon name="down" size={16} />Resource Overview (associated JOB)，Host：k1s-node1，Instance：192.168.100.164:9110</RowTitle>

            <Panel $w={24} $h={7}>
              <Corner>i</Corner>
              <PanelTitle>
                Server Resource Overview【JOB：promethues-node，Total：1】
                <TitleArrow><Icon name="down" size={16} /></TitleArrow>
              </PanelTitle>
              <OverviewTable />
              <ResizeHandle />
            </Panel>

            <Panel $w={8} $h={7}>
              <PanelTitle>promethues-node：Overall total 5m load &amp; average CPU used%</PanelTitle>
              <Chart
                left={65}
                right={62}
                y={['2.50', '2', '1.50', '1', '0.500', '0']}
                y2={['20%', '19%', '18%', '17%']}
                title="Total 5m load"
                title2="Overall average used%"
                series={[
                  { color: colors.red, points: [[13, 0.8], [13.5, 0.8]] },
                  { color: colors.yellow, points: [[13, 0.1], [13.5, 0.052]] },
                ]}
                dots={[[13, 0.169], [13.5, 0.705]]}
              />
              <Legend
                items={[
                  ['CPU Cores', '2', colors.red],
                  ['Total 5m load', '0.130', colors.yellow],
                  ['Overall average used%', '19.1%', colors.cyan],
                ]}
              />
            </Panel>

            <Panel $w={8} $h={7}>
              <PanelTitle>promethues-node：Overall total memory &amp; average memory used%</PanelTitle>
              <Chart
                left={81}
                right={63}
                y={memoryTicks}
                y2={['67%', '66%', '65%', '64%', '63%']}
                title="Total"
                title2="Overall Average Used%"
                series={[
                  { color: colors.red, points: [[13, 0.956], [13.5, 0.956]] },
                  { color: colors.yellow, points: [[13, 0.613], [13.5, 0.637]] },
                ]}
                dots={[[13, 0.255], [13.5, 0.938]]}
              />
              <Legend
                items={[
                  ['Total', '1.8 GiB', colors.red],
                  ['Total Used', '1.2 GiB', colors.yellow],
                  ['Overall Average Used%', '66.7%', colors.cyan],
                ]}
              />
            </Panel>

            <Panel $w={8} $h={7}>
              <PanelTitle>promethues-node：Overall total disk &amp; average disk used%</PanelTitle>
              <Chart
                left={81}
                right={72}
                y={['23.3 GiB', '18.6 GiB', '14.0 GiB', '9.3 GiB', '4.7 GiB', '0 B']}
                y2={['39%', '39.0%', '38.9%', '38.9%']}
                title="Total"
                title2="Overall Average Used%"
                series={[
                  { color: colors.red, points: [[13, 0.861], [13.5, 0.861]] },
                  { color: colors.yellow, points: [[13, 0.334], [13.5, 0.334]] },
                ]}
                dots={[[13, 0.02], [13.5, 0.794]]}
              />
              <Legend
                items={[
                  ['Total', '20.0 GiB', colors.red],
                  ['Total Used', '7.8 GiB', colors.yellow],
                  ['Overall Average Used%', '39.0%', colors.cyan],
                ]}
              />
            </Panel>

            <RowTitle><Icon name="down" size={16} />Resource Details：【k1s-node1】</RowTitle>

            <StatStack>
              <StatPanel title="Uptime">1 hour</StatPanel>
              <StatPanel title="CPU Cores">2</StatPanel>
              <StatPanel title="Total RAM">2 GiB</StatPanel>
            </StatStack>

            <Panel $w={3} $h={6}><BarGauges /></Panel>

            <Panel $w={10} $h={6}>
              <Corner>i</Corner>
              <PanelTitle>【k1s-node1】：Disk Space Used Basic(EXT?/XFS)</PanelTitle>
              <DiskTable />
            </Panel>

            <StatStack>
              <StatPanel title="CPU iowait">10.84%</StatPanel>
              <StatPanel title="Free inodes:/">9.83 Mil</StatPanel>
              <StatPanel title="Total filefd">6,553,600</StatPanel>
            </StatStack>

            <Panel $w={7} $h={6}>
              <PanelTitle>Internet traffic per hour All</PanelTitle>
              <Chart
                left={83}
                right={24}
                step={2}
                below={11}
                y={['19.1 MiB', '9.54 MiB', '0 B', '-9.5 MiB', '-19 MiB']}
                title="transmit（-）/receive（+）"
                titleShift={10}
                blocks={traffic}
              />
            </Panel>

            <Panel $w={8} $h={8}>
              <PanelTitle>CPU% Basic</PanelTitle>
              <Chart
                left={37}
                right={25}
                y={['60%', '40%', '20%', '0%']}
                series={[
                  { color: colors.red, points: cpuTotal },
                  { color: colors.cyan, points: cpuWait, fill: 0.12 },
                  { color: colors.green, points: cpuSystem, width: 4 },
                  { color: colors.yellow, points: cpuUser },
                ]}
              />
              <LegendTable
                widths={[57, 57, 56, 66]}
                thumb={50}
                rows={[
                  ['Total', colors.red, '15.39%', '56.39%', '18.41%', '18.30%'],
                  ['Iowait', colors.cyan, '0.38%', '12.78%', '10.24%', '11.12%'],
                ]}
              />
            </Panel>

            <Panel $w={8} $h={8}>
              <PanelTitle>Memory Basic</PanelTitle>
              <Chart
                left={61}
                right={29}
                y={memoryTicks}
                title2="Utilization%"
                titleShift={7}
                series={[
                  { color: colors.yellow, points: memUsed, fill: 0.12 },
                  { color: colors.cyan, points: memFree, fill: 0.12 },
                  { color: colors.red, points: [[12.89, 0.955], [END, 0.955]] },
                ]}
              />
              <LegendTable
                widths={[79, 79, 79, 80]}
                thumb={63}
                rows={[
                  ['Total', colors.red, '1.78 GiB', '1.78 GiB', '1.78 GiB', '1.78 GiB'],
                  ['Used', colors.yellow, '1002.07 MiB', '1.21 GiB', '1.17 GiB', '1.17 GiB'],
                ]}
              />
            </Panel>

            <Panel $w={8} $h={8}>
              <PanelTitle>Network bandwidth usage per second All</PanelTitle>
              <Chart
                left={86}
                right={24}
                y={['400 kb/s', '200 kb/s', '0 b/s', '-200 kb/s', '-400 kb/s']}
                title="transmit（-）/receive（+）"
                titleShift={10}
                series={bandwidth}
              />
              <LegendTable
                widths={[82, 82, 82, 82]}
                thumb={30}
                rows={[
                  ['ens33_receive', colors.magenta, '51.32 kb/s', '308.94 kb/s', '286.39 kb/s', '286.50 kb/s'],
                  ['calid75abf4f5e0_transmit', colors.orange, '119.71 b/s', '278.39 kb/s', '264.76 kb/s', '271.73 kb/s'],
                ]}
              />
            </Panel>

            <Panel $w={8} $h={8}>
              <PanelTitle>System Load</PanelTitle>
              <Chart left={45} right={24} y={['2.50', '2', '1.50', '1', '0.500', '0']} />
            </Panel>
            <Panel $w={8} $h={8}>
              <Corner>i</Corner>
              <PanelTitle>Disk R/W Data</PanelTitle>
              <Chart left={85} right={25} y={['5 MB/s', '0 B/s', '-5 MB/s']} title="read（-）/write（+）" titleShift={-54} />
            </Panel>
            <Panel $w={8} $h={8}>
              <PanelTitle>Disk Space Used% Basic</PanelTitle>
              <Chart left={45} right={24} y={['100%', '75%', '50%', '25%', '0%']} />
            </Panel>
          </Grid>
        </Main>
        <PageThumb />
      </Shell>
      <Watermark>CSDN @来自南半球的大伟</Watermark>
    </Screen>
  );
}
